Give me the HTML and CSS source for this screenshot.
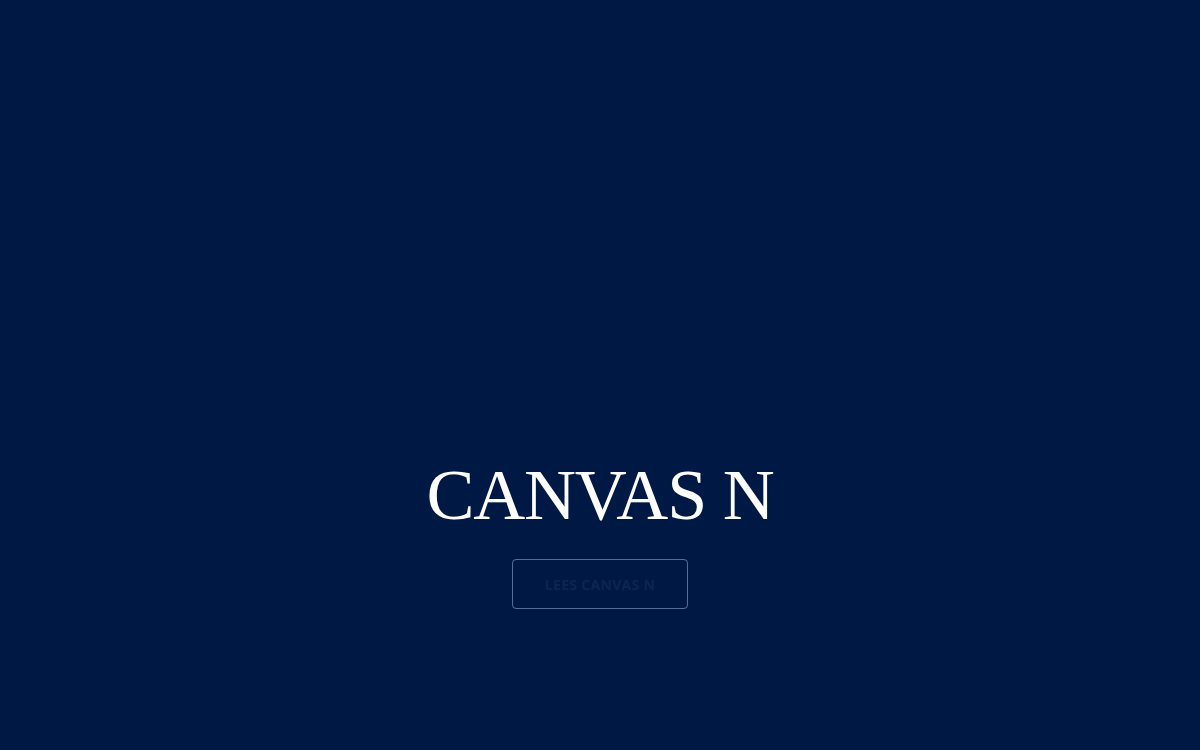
FILE: index.html
```html
<!DOCTYPE html>
<html lang="nl">
<head>
<meta charset="utf-8">
<title>Canvas N</title>
<link rel="stylesheet" href="styles.css">
</head>
<body>
<main class="hero">
  <h1 class="title">CANVAS N</h1>
  <a class="btn" href="#">LEES CANVAS N</a>
</main>
</body>
</html>
```
FILE: styles.css
```css
html, body {
  margin: 0;
  padding: 0;
  height: 100%;
  background: #001944;
}
.hero {
  height: 750px;
  display: flex;
  flex-direction: column;
  align-items: center;
  box-sizing: border-box;
  padding-top: 452px;
}
.title {
  margin: 0;
  font-family: "Liberation Serif", serif;
  font-weight: 400;
  font-size: 72px;
  line-height: 86px;
  letter-spacing: -1.2px;
  color: #ffffff;
}
.btn {
  margin-top: 21px;
  width: 176px;
  height: 50px;
  box-sizing: border-box;
  border: 1px solid rgba(140, 165, 210, 0.6);
  border-radius: 4px;
  display: flex;
  align-items: center;
  justify-content: center;
  font-family: "Open Sans", sans-serif;
  font-weight: 700;
  font-size: 14px;
  letter-spacing: 0.3px;
  color: #0c2552;
  text-decoration: none;
}
```
